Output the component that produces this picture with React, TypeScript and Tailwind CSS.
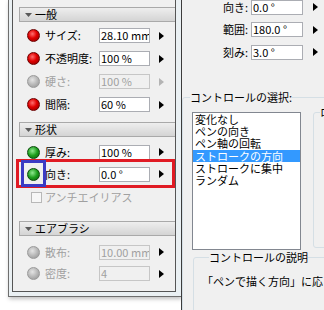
import React from 'react';

type Dot = 'red' | 'green' | 'gray';

const dotClass: Record<Dot, string> = {
  red: 'border-[#6d0000] bg-[radial-gradient(circle_at_40%_35%,#ff7070_0%,#e00000_45%,#850000_100%)]',
  green: 'border-[#0a4a0a] bg-[radial-gradient(circle_at_40%_35%,#90e890_0%,#1c9e1c_50%,#0b5a0b_100%)]',
  gray: 'border-[#9a9a9a] bg-[radial-gradient(circle_at_40%_35%,#e4e4e4_0%,#b8b8b8_50%,#909090_100%)]',
};

const Arrow = ({ gray, className }: { gray?: boolean; className: string }) => (
  <svg width="5" height="8" viewBox="0 0 5 8" className={`shrink-0 ${className}`}>
    <path d="M0 0L5 4L0 8Z" fill={gray ? '#b4b4b4' : '#000'} />
  </svg>
);

const Header = ({ title, className }: { title: string; className: string }) => (
  <div
    className={`ml-[6px] flex h-[15px] items-center border-y border-l border-[#a9a9a9] bg-linear-to-b from-[#eeeeee] to-[#d4d4d4] ${className}`}
  >
    <svg width="7" height="4" viewBox="0 0 7 4" className="ml-[5px] shrink-0">
      <path d="M0 0H7L3.5 4Z" fill="#5a5a5a" />
    </svg>
    <span className="ml-[3px] leading-none">{title}</span>
  </div>
);

const Row = ({
  dot,
  label,
  value,
  disabled,
  arrowGray,
  h,
}: {
  dot: Dot;
  label: string;
  value: string;
  disabled?: boolean;
  arrowGray?: boolean;
  h: string;
}) => (
  <div className={`flex items-center ${h}`}>
    <span className={`ml-[14px] h-[13px] w-[13px] shrink-0 rounded-full border ${dotClass[dot]}`} />
    <span className={`ml-[5px] w-[54px] shrink-0 leading-none ${disabled ? 'text-[#a0a0a0]' : 'text-black'}`}>
      {label}
    </span>
    <div
      className={`flex h-[15px] w-[51px] shrink-0 items-center overflow-hidden whitespace-nowrap border px-[1px] leading-none ${
        disabled ? 'border-[#c6c6c6] bg-[#f0f0f0] text-[#a0a0a0]' : 'border-[#abadb3] bg-white text-black'
      }`}
    >
      {value}
    </div>
    <Arrow gray={arrowGray} className="ml-[9px]" />
  </div>
);

const RightRow = ({ label, value }: { label: string; value: string }) => (
  <div className="flex h-[22.5px] items-center">
    <span className="w-[66px] shrink-0 text-right leading-none">{label}</span>
    <div className="ml-[3px] flex h-[15px] w-[52px] shrink-0 items-center border border-[#abadb3] bg-white px-[1px] leading-none">
      {value}
    </div>
    <Arrow className="ml-[10px]" />
  </div>
);

const items = ['変化なし', 'ペンの向き', 'ペン軸の回転', 'ストロークの方向', 'ストロークに集中', 'ランダム'];

export default function App() {
  return (
    <div className="flex h-[310px] w-[324px] overflow-hidden bg-white font-['Noto_Sans_CJK_JP','Noto_Sans',sans-serif] text-[11px] text-black">
      {/* floating palette */}
      <div className="w-[181px] shrink-0 pl-[8px]">
        <div className="h-[297px] border-b border-l border-[#6e6e6e] bg-[#eaf0f3] pl-[3px] shadow-[1px_2px_4px_rgba(0,0,0,0.25)]">
          <div className="relative h-[292px] w-[164px] border-x border-b border-[#555] bg-[#f0f0f0] pt-[7px]">
            <Header title="一般" className="" />
            <div className="mt-[2px]">
              <Row dot="red" label="サイズ:" value="28.10 mm" h="h-[23px]" />
              <Row dot="red" label="不透明度:" value="100 %" h="h-[23px]" />
              <Row dot="gray" label="硬さ:" value="100 %" disabled arrowGray h="h-[23px]" />
              <Row dot="red" label="間隔:" value="60 %" h="h-[23px]" />
            </div>

            <Header title="形状" className="mt-[6px]" />
            <div className="mt-[4px]">
              <Row dot="green" label="厚み:" value="100 %" h="h-[22px]" />
              <Row dot="green" label="向き:" value="0.0 °" h="h-[22px]" />
              <div className="flex h-[24px] items-center">
                <span className="ml-[18px] h-[11px] w-[11px] shrink-0 border border-[#b8b8b8] bg-[#f7f7f7]" />
                <span className="ml-[3px] leading-none text-[#a0a0a0]">アンチエイリアス</span>
              </div>
            </div>

            <Header title="エアブラシ" className="mt-[12px]" />
            <div className="mt-[5px]">
              <Row dot="gray" label="散布:" value="10.00 mm" disabled h="h-[22px]" />
              <Row dot="gray" label="密度:" value="4" disabled h="h-[21px]" />
            </div>

            {/* annotation boxes */}
            <div className="absolute left-[3px] top-[159px] h-[29px] w-[159px] border-[3px] border-[#e01b24]" />
            <div className="absolute left-[8px] top-[160px] h-[27px] w-[25px] border-[3px] border-[#3b3bc4]" />
          </div>
        </div>
      </div>

      {/* dialog behind */}
      <div className="h-full flex-1 overflow-hidden border-l border-[#3c3c3c] bg-[#f0f0f0]">
        <div className="-mt-[4px]">
          <RightRow label="向き:" value="0.0 °" />
          <RightRow label="範囲:" value="180.0 °" />
          <RightRow label="刻み:" value="3.0 °" />
        </div>

        <fieldset className="mt-[27px] h-[260px] w-[220px] rounded-[3px] border border-[#d5dfe5]">
          <legend className="ml-[7px] leading-[13px]">コントロールの選択:</legend>
          <div className="mt-[8px] flex items-start">
            <div className="ml-[9px] h-[138px] w-[109px] shrink-0 border border-[#828790] bg-white">
              {items.map((it) => (
                <div
                  key={it}
                  className={`h-[12.4px] whitespace-nowrap pl-[2px] leading-[12.4px] ${
                    it === 'ストロークの方向' ? 'bg-[#3399ff] text-white' : ''
                  }`}
                >
                  {it}
                </div>
              ))}
            </div>
            <fieldset className="-mt-[6px] ml-[12px] h-[142px] w-[80px] shrink-0 rounded-[3px] border border-[#d5dfe5]">
              <legend className="ml-[6px] leading-[13px]">ロ</legend>
            </fieldset>
          </div>

          <fieldset className="ml-[10px] mt-[1px] h-[80px] w-[200px] rounded-[3px] border border-[#d5dfe5] pl-[8px]">
            <legend className="ml-[7px] leading-[13px]">コントロールの説明</legend>
            <div className="mt-[11px] whitespace-nowrap leading-[13px]">「ペンで描く方向」に応じて</div>
          </fieldset>
        </fieldset>
      </div>
    </div>
  );
}
